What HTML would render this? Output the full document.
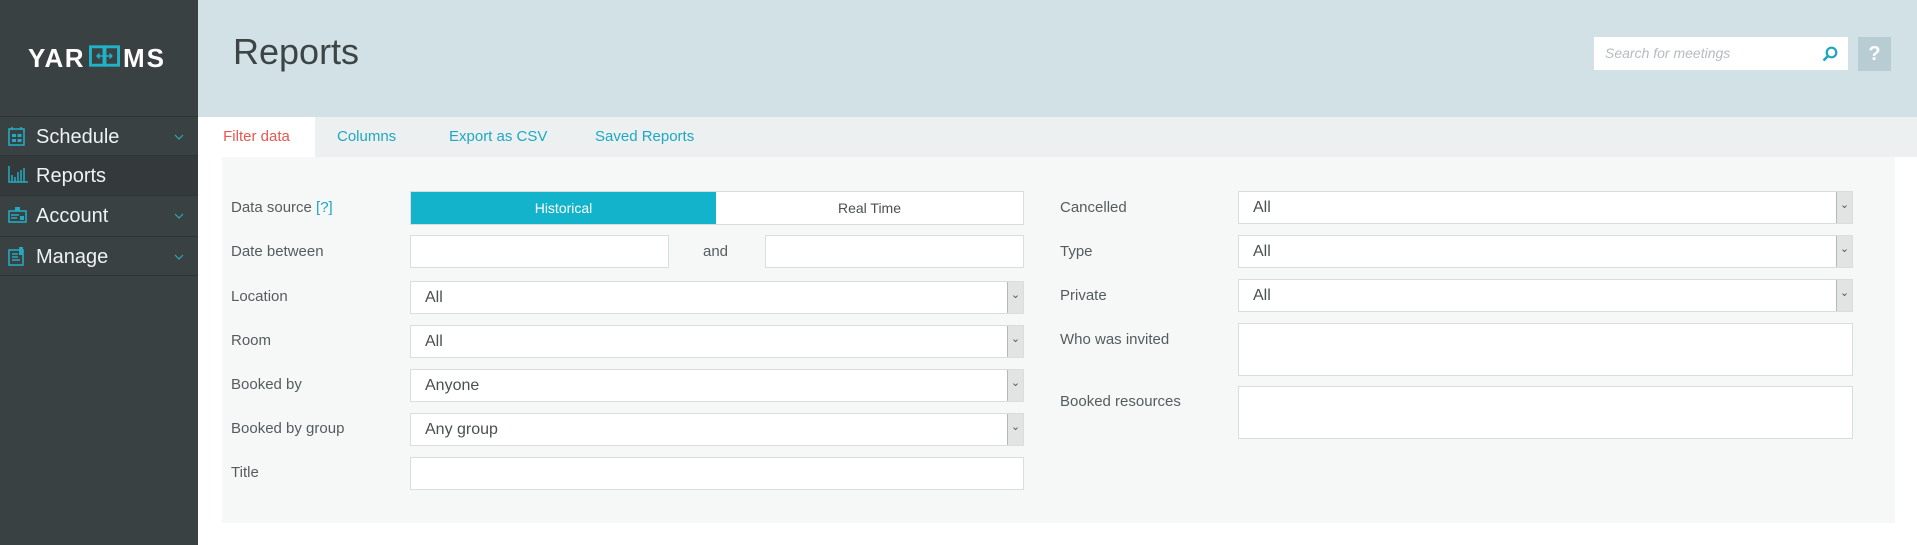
<!DOCTYPE html>
<html><head><meta charset="utf-8"><style>
*{box-sizing:border-box;margin:0;padding:0}
body{width:1917px;height:545px;position:relative;background:#fff;font-family:"Liberation Sans",sans-serif;overflow:hidden}
.a{position:absolute}
#side{left:0;top:0;width:198px;height:545px;background:#3a4143}
.nav{position:absolute;left:0;width:198px;height:40px;border-top:1px solid #2f3537;color:#eef2f2;font-size:20px;line-height:40px;padding-left:36px}
.nav .ch{position:absolute;right:14px;top:17px}
.ic{position:absolute;left:8px;top:10px}
#hdr{left:198px;top:0;width:1719px;height:117px;background:#d1e1e5}
#tabs{left:198px;top:117px;width:1719px;height:40px;background:#edf0f1}
.tab{position:absolute;top:0;height:40px;line-height:40px;font-size:15px;color:#1ea8c2}
#panel{left:222px;top:157px;width:1673px;height:366px;background:#f6f8f8}
.lbl{position:absolute;font-size:15px;color:#555c5e}
.inp{position:absolute;background:#fff;border:1px solid #d9dddd;height:33px}
.sel{font-size:16px;color:#4a5052;line-height:31px;padding-left:14px}
.sel::after{content:"⌄";position:absolute;right:0;top:0;width:15px;height:31px;background:#e2e3e3;border-left:1px solid #b5b8b8;font-size:11px;line-height:26px;text-align:center;color:#555}
</style></head><body>
<div id="side" class="a">
  <div class="a" style="left:28px;top:43px;font-weight:bold;font-size:26px;color:#fff;letter-spacing:1.5px">YAR</div>
  <svg class="a" style="left:89px;top:45px" width="31" height="22" viewBox="0 0 32 22"><rect x="1.5" y="1.5" width="14" height="19" fill="none" stroke="#1fb3c9" stroke-width="3"/><rect x="16.5" y="1.5" width="14" height="19" fill="none" stroke="#1fb3c9" stroke-width="3"/><path d="M8 11h16M8 11l3-2.5M8 11l3 2.5M24 11l-3-2.5M24 11l-3 2.5" stroke="#1fb3c9" stroke-width="1.5" fill="none"/></svg>
  <div class="a" style="left:123px;top:43px;font-weight:bold;font-size:26px;color:#fff;letter-spacing:2px">MS</div>
  <div class="nav" style="top:116px"><svg class="ic" width="17" height="19" viewBox="0 0 17 19"><rect x="1" y="2" width="15" height="16" fill="none" stroke="#26a9c0" stroke-width="1.6"/><rect x="4" y="7" width="4" height="3" fill="#26a9c0"/><rect x="9.5" y="7" width="4" height="3" fill="#26a9c0"/><rect x="4" y="12" width="4" height="3" fill="#26a9c0"/><rect x="9.5" y="12" width="4" height="3" fill="#26a9c0"/><path d="M4 0v3M13 0v3" stroke="#26a9c0" stroke-width="1.6"/></svg>Schedule<svg class="ch" width="10" height="6" viewBox="0 0 10 6"><path d="M1 1l4 4 4-4" stroke="#2fa6ba" stroke-width="1.2" fill="none"/></svg></div>
  <div class="nav" style="top:155px;background:#343a3c"><svg class="ic" width="20" height="17" viewBox="0 0 20 17"><path d="M1 0v16h19M4 16V9M7 16V11M10 16V6M13 16V4M16 16V2" stroke="#26a9c0" stroke-width="1.5" fill="none"/></svg>Reports</div>
  <div class="nav" style="top:195px"><svg class="ic" width="19" height="17" viewBox="0 0 19 17"><rect x="1" y="5" width="17" height="11" fill="none" stroke="#26a9c0" stroke-width="1.6"/><rect x="7" y="1" width="5" height="4" fill="#26a9c0"/><path d="M3 9h8M3 12h6" stroke="#26a9c0" stroke-width="1.5"/><rect x="12" y="10" width="4" height="4" fill="#26a9c0"/></svg>Account<svg class="ch" width="10" height="6" viewBox="0 0 10 6"><path d="M1 1l4 4 4-4" stroke="#2fa6ba" stroke-width="1.2" fill="none"/></svg></div>
  <div class="nav" style="top:236px;border-bottom:1px solid #2f3537"><svg class="ic" width="17" height="19" viewBox="0 0 17 19"><rect x="1" y="3" width="14" height="15" fill="none" stroke="#26a9c0" stroke-width="1.6"/><path d="M4 7h6M4 10h6M4 13h8" stroke="#26a9c0" stroke-width="1.5"/><rect x="11" y="0" width="4" height="8" fill="#26a9c0"/></svg>Manage<svg class="ch" width="10" height="6" viewBox="0 0 10 6"><path d="M1 1l4 4 4-4" stroke="#2fa6ba" stroke-width="1.2" fill="none"/></svg></div>
</div>
<div id="hdr" class="a">
  <div class="a" style="left:35px;top:31px;font-size:36px;color:#3d4446">Reports</div>
  <div class="a" style="left:1396px;top:37px;width:254px;height:33px;background:#fff"><span class="a" style="left:11px;top:8px;font-size:14px;font-style:italic;color:#b5bcbf">Search for meetings</span><svg class="a" style="left:228px;top:9px" width="16" height="16" viewBox="0 0 16 16"><circle cx="9.5" cy="6.5" r="4.8" fill="none" stroke="#1aa6bd" stroke-width="2.2"/><path d="M6 10l-4.5 4.5" stroke="#1aa6bd" stroke-width="2.6"/></svg></div>
  <div class="a" style="left:1660px;top:37px;width:33px;height:34px;background:#b8ccd3;color:#fff;font-weight:bold;font-size:20px;text-align:center;line-height:34px">?</div>
</div>
<div id="tabs" class="a">
  <div class="tab" style="left:0;width:117px;background:#fff;color:#e5574f;text-align:center">Filter data</div>
  <div class="tab" style="left:139px">Columns</div>
  <div class="tab" style="left:251px">Export as CSV</div>
  <div class="tab" style="left:397px">Saved Reports</div>
</div>
<div id="panel" class="a"></div>
<div class="lbl" style="left:231px;top:199px">Data source <span style="color:#1ea8c2">[?]</span></div>
<div class="a" style="left:410px;top:191px;width:614px;height:34px;border:1px solid #d9dddd;background:#fff">
  <div class="a" style="left:0;top:0;width:305px;height:32px;background:#13b4cb;color:#fff;font-size:14px;text-align:center;line-height:32px">Historical</div>
  <div class="a" style="left:305px;top:0;width:307px;height:32px;color:#4a5052;font-size:14px;text-align:center;line-height:32px">Real Time</div>
</div>
<div class="lbl" style="left:231px;top:243px">Date between</div>
<div class="inp" style="left:410px;top:235px;width:259px"></div>
<div class="lbl" style="left:703px;top:243px">and</div>
<div class="inp" style="left:765px;top:235px;width:259px"></div>
<div class="lbl" style="left:231px;top:288px">Location</div>
<div class="inp sel" style="left:410px;top:281px;width:614px">All</div>
<div class="lbl" style="left:231px;top:332px">Room</div>
<div class="inp sel" style="left:410px;top:325px;width:614px">All</div>
<div class="lbl" style="left:231px;top:376px">Booked by</div>
<div class="inp sel" style="left:410px;top:369px;width:614px">Anyone</div>
<div class="lbl" style="left:231px;top:420px">Booked by group</div>
<div class="inp sel" style="left:410px;top:413px;width:614px">Any group</div>
<div class="lbl" style="left:231px;top:464px">Title</div>
<div class="inp" style="left:410px;top:457px;width:614px"></div>

<div class="lbl" style="left:1060px;top:199px">Cancelled</div>
<div class="inp sel" style="left:1238px;top:191px;width:615px">All</div>
<div class="lbl" style="left:1060px;top:243px">Type</div>
<div class="inp sel" style="left:1238px;top:235px;width:615px">All</div>
<div class="lbl" style="left:1060px;top:287px">Private</div>
<div class="inp sel" style="left:1238px;top:279px;width:615px">All</div>
<div class="lbl" style="left:1060px;top:331px">Who was invited</div>
<div class="inp" style="left:1238px;top:323px;width:615px;height:53px"></div>
<div class="lbl" style="left:1060px;top:393px">Booked resources</div>
<div class="inp" style="left:1238px;top:386px;width:615px;height:53px"></div>
</body></html>
